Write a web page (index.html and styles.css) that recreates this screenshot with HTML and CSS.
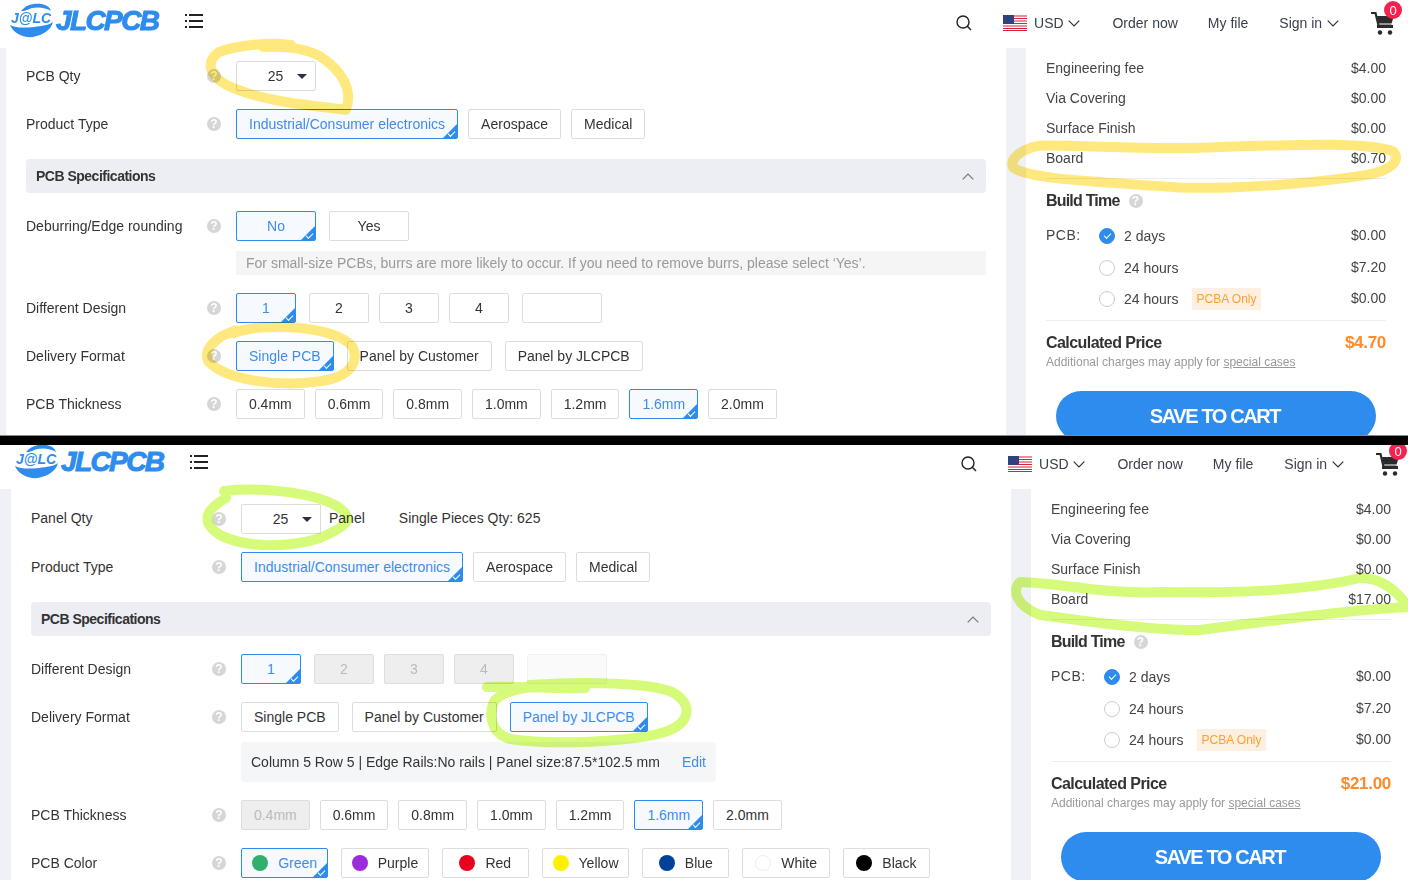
FILE: index.html
```html
<!DOCTYPE html>
<html lang="en">
<head>
<meta charset="utf-8">
<title>JLCPCB quote comparison</title>
<link rel="stylesheet" href="styles.css">
</head>
<body>
<svg class="defs" aria-hidden="true">
  <symbol id="i-logo" viewBox="0 0 152 36">
    <path d="M11 8 C16 1 27 -1 35 2 C38 3 40 5 41 8 C35 4 24 3 17 7 C15 8 13 8 11 8Z" fill="#2d8cee"/>
    <path d="M0 22 C6 25 14 25 24 24 C32 23 39 22 43 19 C41 27 33 32 23 34 C13 35 3 30 0 22Z" fill="#2d8cee"/>
    <text x="1" y="19.500" class="logo-mark">J@LC</text>
    <text x="46" y="27" class="logo-word">JLCPCB</text>
  </symbol>
  <symbol id="i-menu" viewBox="0 0 18 14">
    <path d="M0 1h2M4 1h14M0 7h2M4 7h14M0 13h2M4 13h14" stroke="#222" stroke-width="2" fill="none"/>
  </symbol>
  <symbol id="i-search" viewBox="0 0 16 16">
    <circle cx="7" cy="7" r="6" stroke="#222" stroke-width="1.4" fill="none"/>
    <path d="M11.3 11.3 15 15" stroke="#222" stroke-width="1.5" fill="none"/>
  </symbol>
  <symbol id="i-flag" viewBox="0 0 24 16">
    <rect width="24" height="16" fill="#fff"/>
    <path d="M0 1h24M0 3.5h24M0 6h24M0 8.500h24M0 11h24M0 13.500h24M0 15.500h24" stroke="#d8213b" stroke-width="1.200"/>
    <rect width="11" height="9" fill="#31407e"/>
  </symbol>
  <symbol id="i-chev" viewBox="0 0 12 7">
    <path d="M.7.7 6 6 11.300.7" stroke="#333" stroke-width="1.200" fill="none"/>
  </symbol>
  <symbol id="i-up" viewBox="0 0 12 7">
    <path d="M.7 6.300 6 1l5.300 5.300" stroke="#777" stroke-width="1.200" fill="none"/>
  </symbol>
  <symbol id="i-cart" viewBox="0 0 24 24">
    <path d="M0 2h4.500l3 12.500h13" stroke="#2b2b2b" stroke-width="2.200" fill="none"/>
    <path d="M6 5h17l-2.500 7.500H7.500Z" fill="#2b2b2b"/>
    <rect x="6" y="14" width="16" height="3" fill="#2b2b2b"/>
    <circle cx="9" cy="21.500" r="2.200" fill="#2b2b2b"/>
    <circle cx="19" cy="21.500" r="2.200" fill="#2b2b2b"/>
  </symbol>
</svg>

<section class="shot shot-first">
  <header class="topbar">
    <svg class="logo"><use href="#i-logo"/></svg>
    <svg class="menu-icon"><use href="#i-menu"/></svg>
    <svg class="search-icon"><use href="#i-search"/></svg>
    <svg class="flag-icon"><use href="#i-flag"/></svg>
    <span class="nav-item nav-usd">USD <svg class="chev"><use href="#i-chev"/></svg></span>
    <span class="nav-item nav-order">Order now</span>
    <span class="nav-item nav-file">My file</span>
    <span class="nav-item nav-sign">Sign in <svg class="chev"><use href="#i-chev"/></svg></span>
    <span class="cart"><svg class="cart-icon"><use href="#i-cart"/></svg><span class="badge">0</span></span>
  </header>
  <div class="body">
    <main class="form">
      <div class="row row-first">
        <span class="label">PCB Qty</span><span class="help">?</span>
        <span class="select">25</span>
      </div>
      <div class="row">
        <span class="label">Product Type</span><span class="help">?</span>
        <span class="opt on">Industrial/Consumer electronics</span><span class="opt">Aerospace</span><span class="opt">Medical</span>
      </div>
      <div class="spec-bar">PCB Specifications <svg class="up"><use href="#i-up"/></svg></div>
      <div class="row">
        <span class="label">Deburring/Edge rounding</span><span class="help">?</span>
        <span class="opt w80 on">No</span><span class="opt w80 gap13">Yes</span>
      </div>
      <div class="note">For small-size PCBs, burrs are more likely to occur. If you need to remove burrs, please select ‘Yes’.</div>
      <div class="row">
        <span class="label">Different Design</span><span class="help">?</span>
        <span class="opt w60 on">1</span><span class="opt w60 gap13">2</span><span class="opt w60">3</span><span class="opt w60">4</span><span class="opt w80 gap13"></span>
      </div>
      <div class="row">
        <span class="label">Delivery Format</span><span class="help">?</span>
        <span class="opt on">Single PCB</span><span class="opt gap13">Panel by Customer</span><span class="opt gap13">Panel by JLCPCB</span>
      </div>
      <div class="row">
        <span class="label">PCB Thickness</span><span class="help">?</span>
        <span class="opt mm">0.4mm</span><span class="opt mm">0.6mm</span><span class="opt mm">0.8mm</span><span class="opt mm">1.0mm</span><span class="opt mm">1.2mm</span><span class="opt mm on">1.6mm</span><span class="opt mm">2.0mm</span>
      </div>
    </main>
    <aside class="price">
      <div class="price-inner">
        <div class="fees">
          <div class="fee"><span>Engineering fee</span><span>$4.00</span></div>
          <div class="fee"><span>Via Covering</span><span>$0.00</span></div>
          <div class="fee"><span>Surface Finish</span><span>$0.00</span></div>
          <div class="fee"><span>Board</span><span>$0.70</span></div>
        </div>
        <div class="build-head">Build Time <span class="help help-build">?</span></div>
        <div class="times">
          <div class="time"><span class="time-label">PCB:</span><span class="radio checked"></span><span>2 days</span><span class="time-price">$0.00</span></div>
          <div class="time"><span class="time-label"></span><span class="radio"></span><span>24 hours</span><span class="time-price">$7.20</span></div>
          <div class="time"><span class="time-label"></span><span class="radio"></span><span>24 hours</span><span class="tag">PCBA Only</span><span class="time-price">$0.00</span></div>
        </div>
        <div class="total"><span>Calculated Price</span><span class="total-value">$4.70</span></div>
        <div class="extra">Additional charges may apply for <u>special cases</u></div>
        <div class="save">SAVE TO CART</div>
      </div>
    </aside>
  </div>
  <svg class="scribble yellow" viewBox="0 0 1408 436">
    <path d="M290 45C265 42 235 46 218 52 204 62 208 75 225 85 255 100 300 105 345 110 353 90 340 70 320 57 305 48 285 46 262 47"/>
    <path d="M235 331C215 337 202 350 207 362 225 382 280 388 320 382 350 378 358 362 352 348 340 332 300 327 270 328 255 328 240 331 232 334"/>
    <path d="M1040 146C1020 150 1010 160 1014 168 1030 180 1100 182 1180 188 1260 190 1340 180 1370 175 1395 170 1402 160 1395 152 1370 142 1300 145 1200 148 1140 150 1080 145 1040 146"/>
  </svg>
</section>

<div class="divider"></div>

<section class="shot shot-second">
  <header class="topbar">
    <svg class="logo"><use href="#i-logo"/></svg>
    <svg class="menu-icon"><use href="#i-menu"/></svg>
    <svg class="search-icon"><use href="#i-search"/></svg>
    <svg class="flag-icon"><use href="#i-flag"/></svg>
    <span class="nav-item nav-usd">USD <svg class="chev"><use href="#i-chev"/></svg></span>
    <span class="nav-item nav-order">Order now</span>
    <span class="nav-item nav-file">My file</span>
    <span class="nav-item nav-sign">Sign in <svg class="chev"><use href="#i-chev"/></svg></span>
    <span class="cart"><svg class="cart-icon"><use href="#i-cart"/></svg><span class="badge">0</span></span>
  </header>
  <div class="body">
    <main class="form">
      <div class="row row-first">
        <span class="label">Panel Qty</span><span class="help">?</span>
        <span class="select">25</span>
        <span class="qty-unit">Panel</span>
        <span class="qty-pieces">Single Pieces Qty: 625</span>
      </div>
      <div class="row">
        <span class="label">Product Type</span><span class="help">?</span>
        <span class="opt on">Industrial/Consumer electronics</span><span class="opt">Aerospace</span><span class="opt">Medical</span>
      </div>
      <div class="spec-bar">PCB Specifications <svg class="up"><use href="#i-up"/></svg></div>
      <div class="row">
        <span class="label">Different Design</span><span class="help">?</span>
        <span class="opt w60 on">1</span><span class="opt w60 gap13 off">2</span><span class="opt w60 off">3</span><span class="opt w60 off">4</span><span class="opt w80 gap13 blank"></span>
      </div>
      <div class="row">
        <span class="label">Delivery Format</span><span class="help">?</span>
        <span class="opt">Single PCB</span><span class="opt gap13">Panel by Customer</span><span class="opt gap13 on">Panel by JLCPCB</span>
      </div>
      <div class="panel-info"><span>Column 5 Row 5 | Edge Rails:No rails | Panel size:87.5*102.5 mm</span><span class="edit">Edit</span></div>
      <div class="row">
        <span class="label">PCB Thickness</span><span class="help">?</span>
        <span class="opt mm off">0.4mm</span><span class="opt mm">0.6mm</span><span class="opt mm">0.8mm</span><span class="opt mm">1.0mm</span><span class="opt mm">1.2mm</span><span class="opt mm on">1.6mm</span><span class="opt mm">2.0mm</span>
      </div>
      <div class="row">
        <span class="label">PCB Color</span><span class="help">?</span>
        <span class="opt color on"><i class="dot green"></i>Green</span><span class="opt color"><i class="dot purple"></i>Purple</span><span class="opt color"><i class="dot red"></i>Red</span><span class="opt color"><i class="dot sun"></i>Yellow</span><span class="opt color"><i class="dot blue"></i>Blue</span><span class="opt color"><i class="dot white"></i>White</span><span class="opt color"><i class="dot black"></i>Black</span>
      </div>
    </main>
    <aside class="price">
      <div class="price-inner">
        <div class="fees">
          <div class="fee"><span>Engineering fee</span><span>$4.00</span></div>
          <div class="fee"><span>Via Covering</span><span>$0.00</span></div>
          <div class="fee"><span>Surface Finish</span><span>$0.00</span></div>
          <div class="fee"><span>Board</span><span>$17.00</span></div>
        </div>
        <div class="build-head">Build Time <span class="help help-build">?</span></div>
        <div class="times">
          <div class="time"><span class="time-label">PCB:</span><span class="radio checked"></span><span>2 days</span><span class="time-price">$0.00</span></div>
          <div class="time"><span class="time-label"></span><span class="radio"></span><span>24 hours</span><span class="time-price">$7.20</span></div>
          <div class="time"><span class="time-label"></span><span class="radio"></span><span>24 hours</span><span class="tag">PCBA Only</span><span class="time-price">$0.00</span></div>
        </div>
        <div class="total"><span>Calculated Price</span><span class="total-value">$21.00</span></div>
        <div class="extra">Additional charges may apply for <u>special cases</u></div>
        <div class="save">SAVE TO CART</div>
      </div>
    </aside>
  </div>
  <svg class="scribble lime" viewBox="0 0 1408 435">
    <path d="M224 46C260 42 310 47 335 60 356 73 350 80 320 93 290 103 245 103 220 90 200 77 205 65 226 53"/>
    <path d="M487 242C520 241 555 244 585 243M530 240C590 236 650 238 672 247 692 258 692 276 668 286 630 298 550 300 510 294 490 288 488 268 495 255 505 246 520 243 535 242"/>
    <path d="M1020 137C1060 138 1110 150 1160 147 1230 148 1300 147 1360 133 1385 133 1400 150 1408 162 1350 165 1300 172 1200 185 1130 185 1060 172 1040 170 1015 160 1012 145 1020 137"/>
  </svg>
</section>
</body>
</html>
```
FILE: styles.css
```css
* { box-sizing: border-box; }
html, body { margin: 0; padding: 0; }
body {
  width: 1408px;
  height: 880px;
  overflow: hidden;
  background: #fff;
  font-family: "Liberation Sans", Arial, sans-serif;
  font-size: 14px;
  color: #333;
}
.defs { display: none; }
.logo-mark { font: italic 700 14px "Liberation Sans", Arial, sans-serif; fill: #2d8cee; }
.logo-word { font: italic 700 28px "Liberation Sans", Arial, sans-serif; fill: #2d8cee; stroke: #2d8cee; stroke-width: 1; letter-spacing: -1.600px; }

.shot {
  --shift: 0px;
  --form-top: 13px;
  position: relative;
  width: 1408px;
  overflow: hidden;
  background: #eff1f6;
}
.shot-first { height: 436px; border-bottom: 1px solid #888; }
.shot-second { --shift: 5px; --form-top: 15px; height: 435px; }
.shot-second .topbar { margin-top: -4px; }
.divider { height: 9px; background: #000; }

.topbar {
  position: relative;
  display: flex;
  align-items: center;
  width: 1408px;
  height: 48px;
  padding: 0 calc(13px - var(--shift)) 2px calc(10px + var(--shift));
  background: #fff;
}
.logo { width: 152px; height: 36px; flex: none; margin-top: -4px; }
.menu-icon { width: 18px; height: 14px; flex: none; margin: -4px 0 0 23px; }
.search-icon { width: 16px; height: 16px; flex: none; margin-left: auto; }
.flag-icon { width: 24px; height: 16px; flex: none; margin-left: 31px; }
.nav-item { display: inline-flex; align-items: center; white-space: pre; color: #3a3f4a; }
.nav-usd { margin-left: 7px; }
.nav-order { margin-left: 32px; }
.nav-file { margin-left: 30px; }
.nav-sign { margin-left: 31px; }
.chev { width: 12px; height: 7px; margin-left: 1px; }
.cart { position: relative; flex: none; margin-left: 32px; height: 24px; }
.cart-icon { width: 24px; height: 24px; display: block; }
.badge {
  position: absolute;
  left: 13px;
  top: -10px;
  width: 18px;
  height: 18px;
  padding-top: 3px;
  border-radius: 50%;
  background: #f5224f;
  color: #fff;
  font-size: 13px;
  line-height: 13px;
  text-align: center;
}

.body {
  display: flex;
  align-items: flex-start;
  gap: 20px;
  height: 400px;
  padding-left: calc(6px + var(--shift));
}
.shot-second .body { height: 395px; }
.form {
  flex: none;
  width: 1000px;
  height: 100%;
  padding: var(--form-top) 20px 0;
  background: #fff;
}
.row {
  display: flex;
  align-items: center;
  height: 30px;
  margin-top: 18px;
  gap: 10px;
  white-space: nowrap;
}
.row-first { margin-top: 0; }
.label { flex: none; width: 181px; margin-right: -10px; }
.shot-second .row-first .label { margin-top: -2px; }
.help {
  flex: none;
  width: 14px;
  height: 14px;
  margin-right: 5px;
  border-radius: 50%;
  background: #d6d6d6;
  color: #fff;
  font-size: 12px;
  font-weight: 700;
  line-height: 14px;
  text-align: center;
}
.select {
  position: relative;
  flex: none;
  width: 80px;
  height: 30px;
  padding-right: 1px;
  border: 1px solid #ddd;
  border-radius: 2px;
  line-height: 28px;
  text-align: center;
  background: #fff;
}
.select::after {
  content: "";
  position: absolute;
  right: 8px;
  top: 12px;
  border-style: solid;
  border-width: 5px 5px 0;
  border-color: #2c3145 transparent transparent;
}
.qty-unit { margin: -2px 0 0 -2px; }
.qty-pieces { margin: -2px 0 0 24px; }

.opt {
  position: relative;
  display: inline-flex;
  align-items: center;
  justify-content: center;
  flex: none;
  height: 30px;
  padding: 0 12px;
  border: 1px solid #ddd;
  border-radius: 2px;
  background: #fff;
}
.w60 { width: 60px; }
.w80 { width: 80px; }
.mm { width: 68.700px; padding: 0; }
.gap13 { margin-left: 3px; }
.on {
  border-color: #2d8cee;
  background: #f6faff;
  color: #3f8cee;
}
.on::after {
  content: "";
  position: absolute;
  right: 0;
  bottom: 0;
  border-style: solid;
  border-width: 0 0 14px 14px;
  border-color: transparent transparent #2d8cee;
}
.on::before {
  content: "";
  position: absolute;
  z-index: 1;
  right: 2px;
  bottom: 3px;
  width: 6px;
  height: 3px;
  border-left: 1px solid #fff;
  border-bottom: 1px solid #fff;
  transform: rotate(-45deg);
}
.off { background: #eee; color: #bbb; }
.blank { background: #fafafa; border-color: #f0f0f0; }
.color {
  width: 87.300px;
  padding: 0;
  margin-right: 3px;
  gap: 10px;
}
.dot { flex: none; width: 16px; height: 16px; border-radius: 50%; }
.green { background: #30b06a; }
.purple { background: #9b2bdc; }
.red { background: #e8001c; }
.sun { background: #fff000; }
.blue { background: #00419a; }
.white { background: #fff; border: 1px solid #eee; }
.black { background: #000; }

.spec-bar {
  display: flex;
  align-items: center;
  justify-content: space-between;
  height: 34px;
  margin-top: 20px;
  padding: 0 12px 0 10px;
  border-radius: 4px;
  background: #edeef3;
  font-weight: 700;
  letter-spacing: -.5px;
}
.up { width: 12px; height: 7px; }
.note {
  height: 24px;
  margin: 10px 0 0 210px;
  padding-left: 10px;
  background: #f5f5f5;
  color: #999;
  line-height: 24px;
}
.panel-info {
  display: flex;
  justify-content: space-between;
  align-items: center;
  width: 475px;
  height: 40px;
  margin: 10px 0 0 210px;
  padding: 0 10px;
  border-radius: 4px;
  background: #f5f6f8;
}
.edit { color: #3f8cee; }

.price { flex: 1; height: 100%; padding: 5px 0 0 20px; background: #fff; }
.price-inner { width: 340px; }
.fees { padding-bottom: 5px; border-bottom: 1px solid #eee; }
.fee { display: flex; justify-content: space-between; align-items: center; height: 30px; color: #444; }
.build-head {
  display: flex;
  align-items: center;
  height: 41px;
  padding-top: 2px;
  font-size: 16px;
  font-weight: 700;
  letter-spacing: -.8px;
}
.help-build { margin-left: 9px; letter-spacing: 0; }
.times { padding-bottom: 6px; border-bottom: 1px solid #eee; }
.time { display: flex; align-items: center; height: 32px; color: #444; }
.time:last-child { height: 30px; }
.time-label { flex: none; width: 53px; margin-top: -2px; letter-spacing: .5px; }
.time-price { margin: -2px 0 0 auto; }
.radio {
  position: relative;
  flex: none;
  width: 16px;
  height: 16px;
  margin-right: 9px;
  border: 1px solid #ccc;
  border-radius: 50%;
}
.checked { background: #2d8cee; border-color: #2d8cee; }
.checked::after {
  content: "";
  position: absolute;
  left: 4px;
  top: 4px;
  width: 6px;
  height: 3px;
  border-left: 1px solid #fff;
  border-bottom: 1px solid #fff;
  transform: rotate(-45deg);
}
.tag {
  height: 22px;
  margin-left: 14px;
  padding: 0 4px;
  background: #fdf0e0;
  color: #ffa030;
  font-size: 12px;
  line-height: 22px;
}
.total {
  display: flex;
  justify-content: space-between;
  align-items: center;
  height: 28px;
  margin-top: 8px;
  font-size: 16px;
  font-weight: 700;
  letter-spacing: -.55px;
}
.total-value { color: #ff8a2a; font-size: 17px; letter-spacing: -.3px; }
.extra { height: 14px; margin-top: -2px; color: #999; font-size: 12px; line-height: 14px; }
.save {
  width: 320px;
  height: 50px;
  margin: 22px 0 0 10px;
  padding-right: 2px;
  border-radius: 25px;
  background: #2d8cee;
  color: #fff;
  font-size: 20px;
  font-weight: 700;
  line-height: 50px;
  text-align: center;
  letter-spacing: -1.400px;
}

.scribble {
  position: absolute;
  left: 0;
  top: 0;
  width: 1408px;
  height: 100%;
  fill: none;
  stroke-width: 10;
  stroke-linecap: round;
  stroke-linejoin: round;
  mix-blend-mode: multiply;
  pointer-events: none;
}
.yellow { stroke: #ffe97f; }
.lime { stroke: #d6fb7a; }
```
